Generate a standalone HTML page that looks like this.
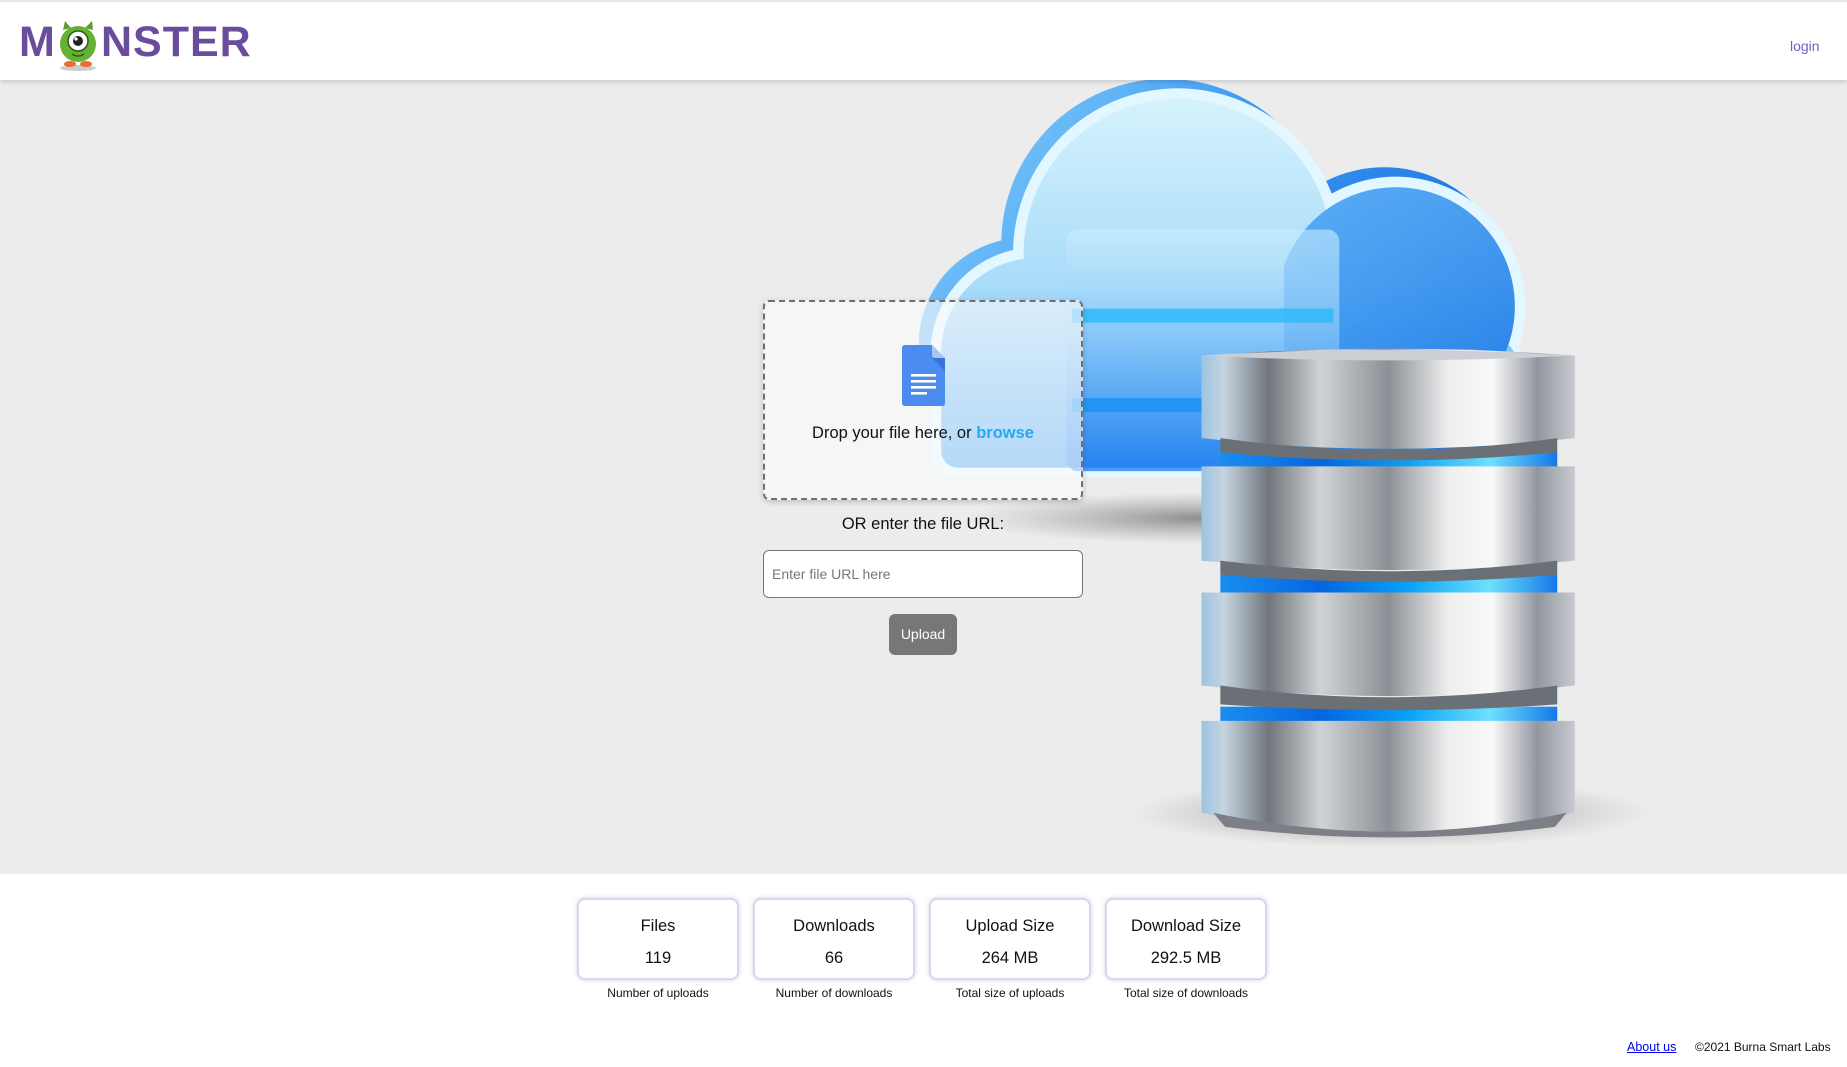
<!DOCTYPE html>
<html><head><meta charset="utf-8">
<style>
*{margin:0;padding:0;box-sizing:border-box}
html,body{width:1847px;height:1067px;overflow:hidden;background:#fff;font-family:"Liberation Sans",sans-serif}
#hdr{position:absolute;left:0;top:0;width:1847px;height:80px;background:#fff;border-top:2px solid #e8e8e8;box-shadow:0 2px 4px rgba(0,0,0,.15);z-index:5}
.logo{position:absolute;top:16px;font-weight:bold;font-size:43px;color:#6a4c9c;letter-spacing:1px}
#login{position:absolute;left:1790px;top:36px;font-size:14px;color:#7a5cc0;text-decoration:none}
#hero{position:absolute;left:0;top:80px;width:1847px;height:794px;background:#ececec;overflow:hidden}
#art{position:absolute;left:0;top:0}
#drop{position:absolute;left:763px;top:300px;width:320px;height:200px;border:2px dashed #707070;border-radius:6px;background:rgba(252,252,252,.62);box-shadow:0 2px 6px rgba(0,0,0,.2);z-index:3}
#drop .t{position:absolute;left:0;width:100%;top:122px;text-align:center;font-size:16.5px;color:#111}
#drop .t b{color:#25aaef}
#or{position:absolute;left:763px;width:320px;top:515px;text-align:center;font-size:16.5px;color:#111;z-index:3}
#url{position:absolute;left:763px;top:550px;width:320px;height:48px;border:1px solid #777;border-radius:6px;background:#fff;z-index:3;font-size:14px;color:#777;padding:15px 8px}
#up{position:absolute;left:889px;top:614px;width:68px;height:41px;border-radius:6px;background:#777;color:#fff;font-size:14px;text-align:center;line-height:41px;z-index:3}
.card{position:absolute;top:898px;width:162px;height:82px;border:2px solid #ddd6ea;border-radius:8px;box-shadow:0 0 4px rgba(140,110,200,.35);background:#fff;text-align:center;color:#111}
.card .a{position:absolute;top:17px;width:100%;font-size:16.5px}
.card .b{position:absolute;top:49px;width:100%;font-size:16.5px}
.lab{position:absolute;top:986px;width:162px;text-align:center;font-size:12px;color:#111}
#about{position:absolute;left:1627px;top:1040px;font-size:12.5px;color:#00e;text-decoration:underline}
#copy{position:absolute;left:1695px;top:1040px;font-size:12px;color:#111}
</style></head><body>
<div id="hdr">
<div class="logo" style="left:19px">M</div>
<svg style="position:absolute;left:55px;top:18px" width="46" height="52" viewBox="0 0 46 52">
<ellipse cx="23" cy="48" rx="18" ry="3" fill="#ccc"/>
<ellipse cx="15" cy="44" rx="6" ry="3" fill="#f06a2a"/><ellipse cx="31" cy="44" rx="6" ry="3" fill="#f06a2a"/>
<path d="M8 10 L10 1 L16 8 Z M30 8 L37 1 L38 10 Z" fill="#5aa030"/>
<circle cx="23" cy="24" r="18" fill="#66b034"/>
<circle cx="23" cy="21" r="10" fill="#fff" stroke="#2e5a18" stroke-width="1.5"/>
<circle cx="23" cy="21" r="5" fill="#222"/><circle cx="21" cy="19" r="1.6" fill="#fff"/>
<path d="M17 34 Q23 38 29 34" stroke="#2e5a18" stroke-width="1.5" fill="none"/>
</svg>
<div class="logo" style="left:101px">NSTER</div>
<a id="login" href="#">login</a>
</div>
<div id="hero">
<svg id="art" width="1847" height="794" viewBox="0 68 1568 674">
<defs>
<linearGradient id="cf" gradientUnits="userSpaceOnUse" x1="0" y1="80" x2="0" y2="405"><stop offset="0" stop-color="#d6f3fc"/><stop offset=".5" stop-color="#a9dbfa"/><stop offset="1" stop-color="#3d9cf2"/></linearGradient>
<linearGradient id="cb" gradientUnits="userSpaceOnUse" x1="800" y1="70" x2="1290" y2="405"><stop offset="0" stop-color="#8fd8fa"/><stop offset=".4" stop-color="#3f9af4"/><stop offset="1" stop-color="#0a62d8"/></linearGradient>
<linearGradient id="rl" gradientUnits="userSpaceOnUse" x1="1100" y1="180" x2="1290" y2="400"><stop offset="0" stop-color="#3d9cf4"/><stop offset="1" stop-color="#0a6ae0"/></linearGradient>
<linearGradient id="met" x1="0" y1="0" x2="1" y2="0"><stop offset="0" stop-color="#9cc4e0"/><stop offset=".06" stop-color="#c6d4e0"/><stop offset=".18" stop-color="#70767c"/><stop offset=".32" stop-color="#d0d3d6"/><stop offset=".5" stop-color="#8c9096"/><stop offset=".66" stop-color="#eeeeee"/><stop offset=".78" stop-color="#f8f8f8"/><stop offset=".9" stop-color="#9296a0"/><stop offset="1" stop-color="#c8ccd0"/></linearGradient>
<linearGradient id="band" x1="0" y1="0" x2="1" y2="0"><stop offset="0" stop-color="#1a8ef0"/><stop offset=".3" stop-color="#0466e0"/><stop offset=".55" stop-color="#06a0f8"/><stop offset=".8" stop-color="#6ee0ff"/><stop offset="1" stop-color="#1478e8"/></linearGradient>
<linearGradient id="inner" x1="0" y1="0" x2="0" y2="1"><stop offset="0" stop-color="#cdeefd" stop-opacity=".8"/><stop offset=".4" stop-color="#8ccaf8"/><stop offset="1" stop-color="#1a7af0"/></linearGradient>
<radialGradient id="sh"><stop offset="0" stop-color="#666" stop-opacity=".7"/><stop offset="1" stop-color="#888" stop-opacity="0"/></radialGradient>
<clipPath id="rlc"><rect x="1090" y="100" width="220" height="310"/></clipPath>
</defs>
<ellipse cx="1020" cy="440" rx="200" ry="22" fill="url(#sh)"/>
<g fill="url(#cb)" transform="translate(-10,-8)">
<circle cx="1000" cy="215" r="140"/><circle cx="880" cy="300" r="90"/><circle cx="1185" cy="260" r="110"/><rect x="810" y="290" width="490" height="123" rx="20"/>
</g>
<g fill="#e2f7ff">
<circle cx="1000" cy="215" r="140"/><circle cx="880" cy="300" r="90"/><circle cx="1185" cy="260" r="110"/><rect x="790" y="290" width="505" height="115" rx="20"/>
</g>
<g fill="url(#cf)">
<circle cx="1000" cy="215" r="131"/><circle cx="880" cy="300" r="81"/><circle cx="1185" cy="260" r="101"/><rect x="799" y="290" width="487" height="107" rx="14"/>
</g>
<g clip-path="url(#rlc)" opacity=".8"><circle cx="1185" cy="260" r="101" fill="url(#rl)"/><rect x="1100" y="300" width="186" height="97" fill="url(#rl)"/></g>
<rect x="905" y="195" width="232" height="205" rx="10" fill="url(#inner)" opacity=".75"/>
<rect x="910" y="262" width="222" height="12" fill="#2cb8fb" opacity=".8"/>
<rect x="910" y="338" width="222" height="12" fill="#1790f5" opacity=".8"/>
<ellipse cx="1180" cy="690" rx="220" ry="30" fill="url(#sh)"/>
<rect x="1036" y="600" width="286" height="14" fill="url(#band)"/>
<rect x="1036" y="488" width="286" height="16" fill="url(#band)"/>
<rect x="1036" y="382" width="286" height="18" fill="url(#band)"/>
<path d="M1020 612 L1337 612 L1337 690 Q1180 722 1020 690 Z" fill="url(#met)"/>
<path d="M1020 503 L1337 503 L1337 582 Q1180 600 1020 582 Z" fill="url(#met)"/>
<path d="M1020 396 L1337 396 L1337 476 Q1180 492 1020 476 Z" fill="url(#met)"/>
<path d="M1020 302 Q1180 290 1337 302 L1337 372 Q1180 390 1020 372 Z" fill="url(#met)"/>
<path d="M1022 302 Q1180 292 1335 302 Q1180 310 1022 302Z" fill="#ccd0d4"/>
<path d="M1036 372 Q1180 392 1322 372 L1322 384 Q1180 398 1036 384Z" fill="#6a7076"/>
<path d="M1036 476 Q1180 494 1322 476 L1322 488 Q1180 500 1036 488Z" fill="#6a7076"/>
<path d="M1036 582 Q1180 602 1322 582 L1322 598 Q1180 608 1036 598Z" fill="#6a7076"/>
<path d="M1030 690 Q1180 722 1330 690 L1320 702 Q1180 720 1040 702Z" fill="#7c8086"/>
</svg>
</div>
<div id="drop">
<svg style="position:absolute;left:136px;top:43px" width="46" height="62" viewBox="0 0 46 62">
<path d="M4 0 H31 L44 13 V58 Q44 61 41 61 H4 Q1 61 1 58 V3 Q1 0 4 0Z" fill="#4c8bf0"/>
<path d="M31 0 L44 13 H34 Q31 13 31 10Z" fill="#a8c6f8"/>
<path d="M31 13 L44 26 V13Z" fill="#3a74d8"/>
<rect x="10" y="29" width="25" height="2.6" fill="#fff"/><rect x="10" y="35" width="25" height="2.6" fill="#fff"/><rect x="10" y="41" width="25" height="2.6" fill="#fff"/><rect x="10" y="47" width="16" height="2.6" fill="#fff"/>
</svg>
<div class="t">Drop your file here, or <b>browse</b></div>
</div>
<div id="or">OR enter the file URL:</div>
<div id="url">Enter file URL here</div>
<div id="up">Upload</div>
<div class="card" style="left:577px"><div class="a">Files</div><div class="b">119</div></div>
<div class="card" style="left:753px"><div class="a">Downloads</div><div class="b">66</div></div>
<div class="card" style="left:929px"><div class="a">Upload Size</div><div class="b">264 MB</div></div>
<div class="card" style="left:1105px"><div class="a">Download Size</div><div class="b">292.5 MB</div></div>
<div class="lab" style="left:577px">Number of uploads</div>
<div class="lab" style="left:753px">Number of downloads</div>
<div class="lab" style="left:929px">Total size of uploads</div>
<div class="lab" style="left:1105px">Total size of downloads</div>
<a id="about" href="#">About us</a>
<div id="copy">©2021 Burna Smart Labs</div>
</body></html>
